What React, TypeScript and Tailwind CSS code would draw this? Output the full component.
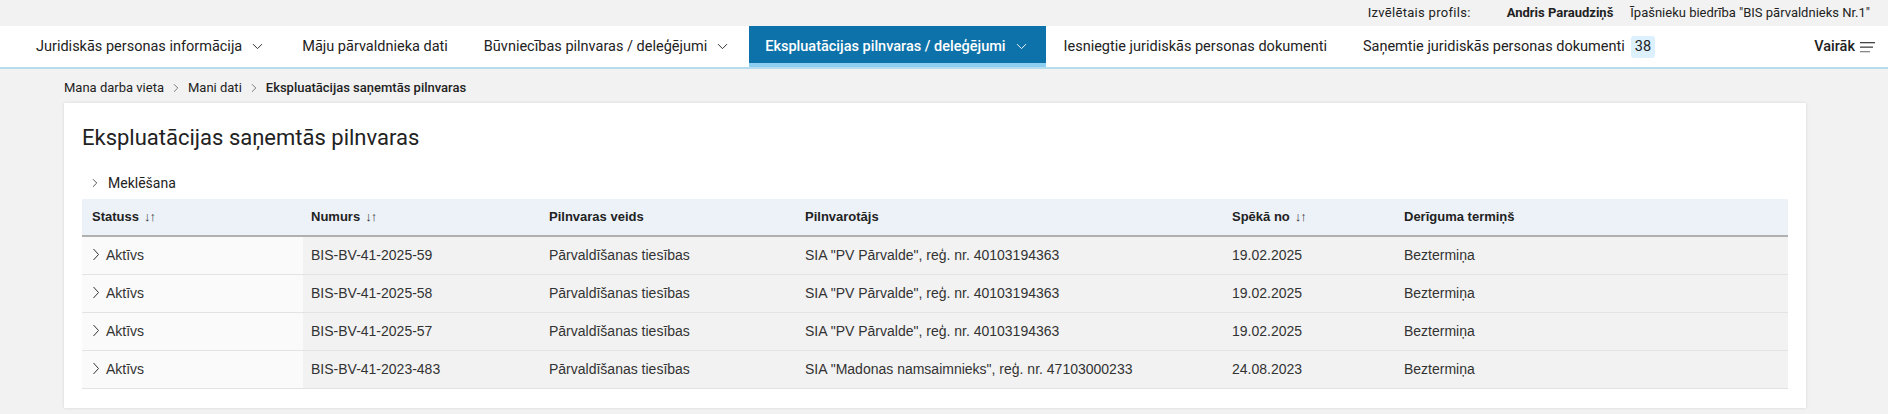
import { ChevronDown, ChevronRight } from "lucide-react";

type Row = {
  numurs: string;
  veids: string;
  pilnvarotajs: string;
  speka: string;
  termins: string;
};

const rows: Row[] = [
  { numurs: "BIS-BV-41-2025-59", veids: "Pārvaldīšanas tiesības", pilnvarotajs: 'SIA "PV Pārvalde", reģ. nr. 40103194363', speka: "19.02.2025", termins: "Beztermiņa" },
  { numurs: "BIS-BV-41-2025-58", veids: "Pārvaldīšanas tiesības", pilnvarotajs: 'SIA "PV Pārvalde", reģ. nr. 40103194363', speka: "19.02.2025", termins: "Beztermiņa" },
  { numurs: "BIS-BV-41-2025-57", veids: "Pārvaldīšanas tiesības", pilnvarotajs: 'SIA "PV Pārvalde", reģ. nr. 40103194363', speka: "19.02.2025", termins: "Beztermiņa" },
  { numurs: "BIS-BV-41-2023-483", veids: "Pārvaldīšanas tiesības", pilnvarotajs: 'SIA "Madonas namsaimnieks", reģ. nr. 47103000233', speka: "24.08.2023", termins: "Beztermiņa" },
];

const cols = ["w-[221px]", "w-[238px]", "w-[256px]", "w-[427px]", "w-[172px]", "flex-1"];

const SortArrows = () => <span className="ml-[5px] text-[13px] font-bold tracking-[-1px] text-[#333]">↓↑</span>;

const Chevron = () => (
  <svg width="8" height="13" viewBox="0 0 8 13" className="mr-1.5 shrink-0 -mt-[3px]">
    <polyline points="1.5,1 6.5,6.5 1.5,12" fill="none" stroke="#333" strokeWidth="1" />
  </svg>
);

const NavItem = ({ label, dropdown, active }: { label: string; dropdown?: boolean; active?: boolean }) => (
  <div
    className={
      active
        ? "flex h-full items-center border-b-[4px] border-[#8ccff0] bg-[#0d72a9] px-[16px] pt-[4px] font-medium text-white"
        : "flex h-full items-center px-[18px] text-[#222]"
    }
  >
    <span>{label}</span>
    {dropdown && <ChevronDown className="ml-[7px]" size={17} strokeWidth={1.3} />}
  </div>
);

export default function App() {
  return (
    <div className="min-h-[414px] w-[1888px] bg-[#f2f2f2] font-['Roboto',sans-serif]">
      {/* profila josla */}
      <div className="flex h-[26px] items-center justify-end pr-[18px] text-[13px] text-[#222]">
        <span className="tracking-[0.3px]">Izvēlētais profils:</span>
        <span className="ml-[36px] font-bold">Andris Paraudziņš</span>
        <span className="ml-[17px]">Īpašnieku biedrība "BIS pārvaldnieks Nr.1"</span>
      </div>

      {/* navigācija */}
      <div className="flex h-[43px] items-stretch border-b-2 border-[#b5dcef] bg-white pl-[18px] text-[14.5px]">
        <NavItem label="Juridiskās personas informācija" dropdown />
        <NavItem label="Māju pārvaldnieka dati" />
        <NavItem label="Būvniecības pilnvaras / deleģējumi" dropdown />
        <NavItem label="Ekspluatācijas pilnvaras / deleģējumi" dropdown active />
        <NavItem label="Iesniegtie juridiskās personas dokumenti" />
        <div className="flex h-full items-center px-[18px] text-[#222]">
          <span>Saņemtie juridiskās personas dokumenti</span>
          <span className="ml-[6px] rounded-[3px] bg-[#dcf0fd] px-[4px] py-[2px] leading-[18px]">38</span>
        </div>
        <div className="ml-auto flex items-center pr-[12px] font-medium text-[#222]">
          <span>Vairāk</span>
          <svg width="16" height="12" viewBox="0 0 16 12" className="ml-[5px]">
            <rect x="0" y="1" width="15" height="1.3" fill="#444" />
            <rect x="0" y="5.5" width="13" height="1.3" fill="#444" />
            <rect x="0" y="10" width="10" height="1.3" fill="#888" />
          </svg>
        </div>
      </div>

      {/* ceļš */}
      <div className="flex h-[34px] items-center pl-[64px] pt-[4px] text-[13px] text-[#222]">
        <span>Mana darba vieta</span>
        <ChevronRight className="mx-[5px] text-[#555]" size={14} strokeWidth={1.3} />
        <span>Mani dati</span>
        <ChevronRight className="mx-[5px] text-[#555]" size={14} strokeWidth={1.3} />
        <span className="font-medium">Ekspluatācijas saņemtās pilnvaras</span>
      </div>

      {/* kartīte */}
      <div className="ml-[64px] w-[1742px] bg-white px-[18px] pb-[19px] shadow-[0_0_3px_rgba(0,0,0,0.12)]">
        <h1 className="pt-[21px] text-[22px] leading-[28px] text-[#222]">Ekspluatācijas saņemtās pilnvaras</h1>
        <div className="mt-[16px] flex h-[30px] items-center pl-[6px] text-[14px] text-[#222]">
          <ChevronRight className="mr-[6px]" size={14} strokeWidth={1.3} />
          <span>Meklēšana</span>
        </div>

        <div className="mt-[1px] font-['Liberation_Sans',Arial,sans-serif] text-[#333]">
          <div className="flex h-[38px] items-center border-b-2 border-[#b0b0b0] bg-[#edf2f9] text-[13px] font-bold text-[#222]">
            <div className={`${cols[0]} pl-[10px]`}>Statuss<SortArrows /></div>
            <div className={`${cols[1]} pl-[8px]`}>Numurs<SortArrows /></div>
            <div className={`${cols[2]} pl-[8px]`}>Pilnvaras veids</div>
            <div className={`${cols[3]} pl-[8px]`}>Pilnvarotājs</div>
            <div className={`${cols[4]} pl-[8px]`}>Spēkā no<SortArrows /></div>
            <div className={`${cols[5]} pl-[8px]`}>Derīguma termiņš</div>
          </div>
          {rows.map((r) => (
            <div key={r.numurs} className="flex h-[38px] items-stretch border-b border-[#e3e3e3] text-[14px]">
              <div className={`${cols[0]} flex items-center bg-[#fafafa] pl-[10px]`}>
                <Chevron />
                <span>Aktīvs</span>
              </div>
              <div className="flex flex-1 items-center bg-[#f2f2f2]">
                <div className={`${cols[1]} pl-[8px]`}>{r.numurs}</div>
                <div className={`${cols[2]} pl-[8px]`}>{r.veids}</div>
                <div className={`${cols[3]} pl-[8px]`}>{r.pilnvarotajs}</div>
                <div className={`${cols[4]} pl-[8px]`}>{r.speka}</div>
                <div className={`${cols[5]} pl-[8px]`}>{r.termins}</div>
              </div>
            </div>
          ))}
        </div>
      </div>
    </div>
  );
}
